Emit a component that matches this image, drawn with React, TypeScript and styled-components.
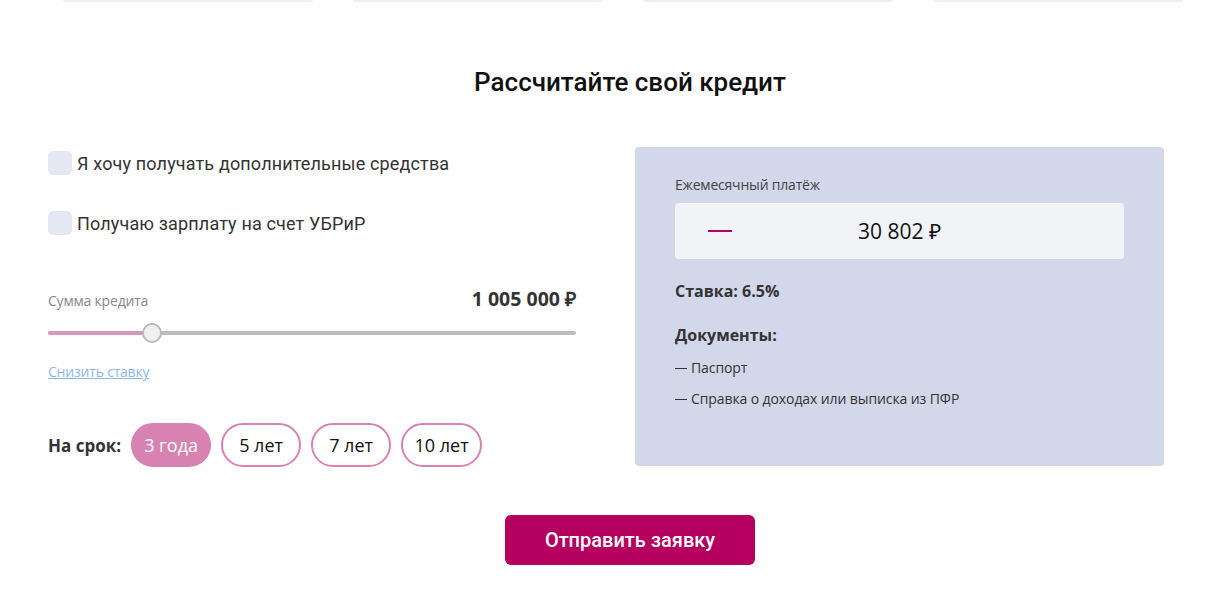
import React, { useState } from "react";
import styled, { createGlobalStyle } from "styled-components";

const Global = createGlobalStyle`
  html, body { margin: 0; padding: 0; background: #fff; }
  body { font-family: Roboto, "Liberation Sans", sans-serif; color: #333; }
  * { box-sizing: border-box; }
`;

const Page = styled.div`
  width: 1205px;
  height: 593px;
  overflow: hidden;
`;

const CardsRow = styled.div`
  display: grid;
  grid-template-columns: repeat(4, 250px);
  column-gap: 40px;
  padding-left: 63px;
`;

const CardEdge = styled.div`
  height: 2px;
  background: #eceff6;
  border-radius: 0 0 3px 3px;
`;

const Title = styled.h2`
  margin: 64px 0 0;
  padding-left: 55px;
  text-align: center;
  font-family: Roboto, sans-serif;
  font-weight: 500;
  font-size: 26px;
  line-height: 32px;
  color: #111;
`;

const Body = styled.div`
  display: grid;
  grid-template-columns: 528px 529px;
  column-gap: 59px;
  padding-left: 48px;
  margin-top: 49px;
`;

const Left = styled.div`
  display: flex;
  flex-direction: column;
  padding-top: 4px;
`;

const CheckRow = styled.label<{ mb: number }>`
  display: flex;
  align-items: center;
  gap: 5px;
  height: 24px;
  margin-bottom: ${(p) => p.mb}px;
  font-family: Roboto, sans-serif;
  font-size: 18px;
  letter-spacing: 0.15px;
  color: #333;
`;

const Box = styled.span`
  width: 24px;
  height: 24px;
  border-radius: 5px;
  background: #e4e8f2;
  flex: none;
`;

const AmountHead = styled.div`
  display: flex;
  justify-content: space-between;
  align-items: baseline;
  margin-top: 50px;
`;

const Muted = styled.span`
  font-family: "Open Sans", sans-serif;
  font-size: 14px;
  color: #888;
  letter-spacing: -0.2px;
`;

const Amount = styled.span`
  font-family: "Open Sans", sans-serif;
  font-weight: 700;
  font-size: 19.5px;
  color: #333;
`;

const Track = styled.div`
  position: relative;
  height: 4px;
  margin-top: 19px;
  border-radius: 2px;
  background: #bdbdbf;
`;

const Fill = styled.div`
  position: absolute;
  left: 0;
  top: 0;
  bottom: 0;
  border-radius: 2px;
  background: #d897bd;
`;

const Thumb = styled.div`
  position: absolute;
  top: 50%;
  width: 20px;
  height: 20px;
  margin-left: -10px;
  margin-top: -10px;
  border-radius: 50%;
  background: #f1f1f3;
  border: 2px solid #b9b9bb;
`;

const Link = styled.a`
  margin-top: 27px;
  font-family: "Open Sans", sans-serif;
  font-size: 14px;
  color: #8cb7ea;
  text-decoration: underline;
  letter-spacing: -0.2px;
  align-self: flex-start;
`;

const TermRow = styled.div`
  display: flex;
  align-items: center;
  gap: 10px;
  margin-top: 42px;
`;

const TermLabel = styled.span`
  font-family: "Open Sans", sans-serif;
  font-weight: 700;
  font-size: 17px;
  color: #333;
`;

const Pill = styled.button<{ active?: boolean; w: number }>`
  height: 44px;
  width: ${(p) => p.w}px;
  border-radius: 22px;
  border: 2px solid #d882b1;
  background: ${(p) => (p.active ? "#d882b1" : "#fff")};
  color: ${(p) => (p.active ? "#fff" : "#111")};
  font-family: "Open Sans", sans-serif;
  font-size: 18px;
  padding: 0;
  cursor: pointer;
`;

const Panel = styled.div`
  background: #d2d8ea;
  border-radius: 4px;
  height: 319px;
  padding: 28px 40px 0;
  display: flex;
  flex-direction: column;
`;

const PanelLabel = styled.span`
  font-family: "Open Sans", sans-serif;
  font-size: 14px;
  color: #444;
  letter-spacing: -0.2px;
`;

const PayBox = styled.div`
  margin-top: 9px;
  height: 56px;
  background: #f2f3f7;
  border-radius: 4px;
  display: flex;
  align-items: center;
  padding-left: 33px;
`;

const Dash = styled.span`
  width: 24px;
  height: 2px;
  background: #b5005f;
  flex: none;
`;

const PayValue = styled.span`
  margin-left: 126px;
  font-family: "Open Sans", sans-serif;
  font-size: 21px;
  color: #111;
`;

const Heading = styled.div<{ mt: number }>`
  margin-top: ${(p) => p.mt}px;
  font-family: "Open Sans", sans-serif;
  font-weight: 700;
  font-size: 16px;
  color: #333;
`;

const DocList = styled.ul`
  list-style: none;
  margin: 12px 0 0;
  padding: 0;
  display: flex;
  flex-direction: column;
  gap: 11px;
`;

const DocItem = styled.li`
  display: flex;
  gap: 4px;
  font-family: "Open Sans", sans-serif;
  font-size: 14px;
  line-height: 20px;
  color: #333;
  letter-spacing: -0.1px;
`;

const DocDash = styled.span`
  width: 12px;
  height: 1px;
  margin-top: 10px;
  background: #333;
  flex: none;
`;

const Footer = styled.div`
  display: flex;
  justify-content: center;
  margin-top: 48px;
  padding-left: 55px;
`;

const Submit = styled.button`
  width: 250px;
  height: 50px;
  border: none;
  border-radius: 6px;
  background: #b5005f;
  color: #fff;
  font-family: Roboto, sans-serif;
  font-weight: 500;
  font-size: 20px;
  cursor: pointer;
`;

export default function App() {
  const [term, setTerm] = useState(3);
  const pct = ((152 - 48) / 528) * 100;
  const terms = [
    { v: 3, t: "3 года", w: 80 },
    { v: 5, t: "5 лет", w: 80 },
    { v: 7, t: "7 лет", w: 80 },
    { v: 10, t: "10 лет", w: 81 },
  ];
  const docs = ["Паспорт", "Справка о доходах или выписка из ПФР"];
  return (
    <Page>
      <Global />
      <CardsRow>
        <CardEdge />
        <CardEdge />
        <CardEdge />
        <CardEdge />
      </CardsRow>
      <Title>Рассчитайте свой кредит</Title>
      <Body>
        <Left>
          <CheckRow mb={36}>
            <Box />
            Я хочу получать дополнительные средства
          </CheckRow>
          <CheckRow mb={0}>
            <Box />
            Получаю зарплату на счет УБРиР
          </CheckRow>
          <AmountHead>
            <Muted>Сумма кредита</Muted>
            <Amount>1 005 000 ₽</Amount>
          </AmountHead>
          <Track>
            <Fill style={{ width: `${pct}%` }} />
            <Thumb style={{ left: `${pct}%` }} />
          </Track>
          <Link href="#">Снизить ставку</Link>
          <TermRow>
            <TermLabel>На срок:</TermLabel>
            {terms.map((x) => (
              <Pill key={x.v} w={x.w} active={term === x.v} onClick={() => setTerm(x.v)}>
                {x.t}
              </Pill>
            ))}
          </TermRow>
        </Left>
        <Panel>
          <PanelLabel>Ежемесячный платёж</PanelLabel>
          <PayBox>
            <Dash />
            <PayValue>30 802 ₽</PayValue>
          </PayBox>
          <Heading mt={21}>Ставка: 6.5%</Heading>
          <Heading mt={22}>Документы:</Heading>
          <DocList>
            {docs.map((d) => (
              <DocItem key={d}>
                <DocDash />
                {d}
              </DocItem>
            ))}
          </DocList>
        </Panel>
      </Body>
      <Footer>
        <Submit>Отправить заявку</Submit>
      </Footer>
    </Page>
  );
}
